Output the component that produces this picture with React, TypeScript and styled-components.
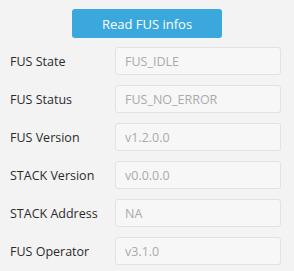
import styled, { createGlobalStyle } from "styled-components";

const fields = [
  { label: "FUS State", value: "FUS_IDLE" },
  { label: "FUS Status", value: "FUS_NO_ERROR" },
  { label: "FUS Version", value: "v1.2.0.0" },
  { label: "STACK Version", value: "v0.0.0.0" },
  { label: "STACK Address", value: "NA" },
  { label: "FUS Operator", value: "v3.1.0" },
];

export default function App() {
  return (
    <>
      <GlobalStyle />
      <Panel>
        <ReadButton>Read FUS infos</ReadButton>
        <Fields>
          {fields.map((f) => (
            <Row key={f.label}>
              <Label>{f.label}</Label>
              <Value readOnly value={f.value} />
            </Row>
          ))}
        </Fields>
      </Panel>
    </>
  );
}

const GlobalStyle = createGlobalStyle`
  html, body {
    margin: 0;
    background: #f3f3f3;
    font-family: "Open Sans", "Noto Sans", sans-serif;
  }
`;

const Panel = styled.div`
  width: 294px;
  height: 271px;
  box-sizing: border-box;
  padding: 9px 13px 0 10px;
  display: flex;
  flex-direction: column;
  align-items: center;
`;

const ReadButton = styled.button`
  width: 150px;
  height: 29px;
  margin-left: 3px;
  border: none;
  border-radius: 3px;
  background: #3ba8dd;
  color: #ffffff;
  font-family: "Open Sans", sans-serif;
  font-size: 13px;
  padding: 0;
  cursor: pointer;
`;

const Fields = styled.div`
  align-self: stretch;
  margin-top: 9px;
  display: flex;
  flex-direction: column;
  gap: 10px;
`;

const Row = styled.div`
  display: grid;
  grid-template-columns: 105px 166px;
  align-items: center;
  height: 28px;
`;

const Label = styled.span`
  font-size: 12.5px;
  color: #2b2b2b;
`;

const Value = styled.input`
  box-sizing: border-box;
  width: 166px;
  height: 28px;
  border: 1px solid #e2e2e2;
  border-radius: 3px;
  background: #f7f7f7;
  color: #aaaaaa;
  font-family: "Open Sans", sans-serif;
  font-size: 12.5px;
  padding: 0 9px;
  outline: none;
`;
